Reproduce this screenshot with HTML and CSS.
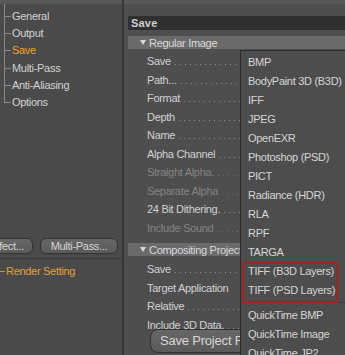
FILE: index.html
```html
<!DOCTYPE html>
<html lang="en">

<head>
    <meta charset="UTF-8">
    <meta name="viewport" content="width=device-width, initial-scale=1.0">
    <title>Render Settings - Save</title>
    <link rel="stylesheet" href="styles.css">
</head>

<body>
    <div class="window">
        <div class="side">
            <div class="strip"></div>
            <ul class="tree">
                <li>General</li>
                <li>Output</li>
                <li class="active">Save</li>
                <li>Multi-Pass</li>
                <li>Anti-Aliasing</li>
                <li>Options</li>
            </ul>
            <div class="side-buttons">
                <button class="btn btn-effect">Effect...</button>
                <button class="btn btn-multi">Multi-Pass...</button>
            </div>
            <div class="side-sep"></div>
            <div class="render-setting">Render Setting</div>
        </div>

        <div class="divider"></div>

        <div class="main">
            <div class="strip"></div>
            <div class="page-title">Save</div>

            <div class="group-head"><span class="arrow"></span>Regular Image</div>
            <div class="rows">
                <div class="row"><span>Save</span><i class="leader"></i></div>
                <div class="row"><span>Path...</span><i class="leader"></i></div>
                <div class="row"><span>Format</span><i class="leader"></i></div>
                <div class="row"><span>Depth</span><i class="leader"></i></div>
                <div class="row"><span>Name</span><i class="leader"></i></div>
                <div class="row"><span>Alpha Channel</span><i class="leader"></i></div>
                <div class="row disabled"><span>Straight Alpha.</span><i class="leader"></i></div>
                <div class="row disabled"><span>Separate Alpha</span><i class="leader"></i></div>
                <div class="row"><span>24 Bit Dithering.</span><i class="leader"></i></div>
                <div class="row disabled"><span>Include Sound</span><i class="leader"></i></div>
            </div>

            <div class="group-head"><span class="arrow"></span>Compositing Project File</div>
            <div class="rows rows-comp">
                <div class="row"><span>Save</span><i class="leader"></i></div>
                <div class="row"><span>Target Application</span></div>
                <div class="row"><span>Relative</span><i class="leader"></i></div>
                <div class="row"><span>Include 3D Data.</span><i class="leader"></i></div>
            </div>
            <button class="btn btn-project">Save Project File...</button>
        </div>

        <ul class="menu">
            <li>BMP</li>
            <li>BodyPaint 3D (B3D)</li>
            <li>IFF</li>
            <li>JPEG</li>
            <li>OpenEXR</li>
            <li>Photoshop (PSD)</li>
            <li>PICT</li>
            <li>Radiance (HDR)</li>
            <li>RLA</li>
            <li>RPF</li>
            <li>TARGA</li>
            <li>TIFF (B3D Layers)</li>
            <li>TIFF (PSD Layers)</li>
            <li class="menu-sep"></li>
            <li>QuickTime BMP</li>
            <li>QuickTime Image</li>
            <li>QuickTime JP2</li>
        </ul>

        <div class="highlight-box"></div>
    </div>
</body>

</html>
```

FILE: styles.css
```css
body {
    margin: 0;
    padding: 0;
    background-color: #4b4b4b;
    font-family: "Liberation Sans", Arial, sans-serif;
    font-size: 11px;
    letter-spacing: -0.3px;
    color: #d2d2d2;
}

.window {
    position: relative;
    display: flex;
    width: 345px;
    height: 355px;
    overflow: hidden;
}

.strip {
    height: 4px;
    background-color: #575757;
}

/* left tree panel */
.side {
    width: 122px;
    flex-shrink: 0;
    background-color: #4a4a4a;
    overflow: hidden;
}

.tree {
    list-style: none;
    margin: 0;
    padding: 4px 0 0 0;
    background: linear-gradient(#8a8a8a, #8a8a8a) 4px 0 / 1px 4px no-repeat;
}

.tree li {
    height: 17.2px;
    line-height: 17.2px;
    padding-left: 12px;
    background:
        linear-gradient(#8a8a8a, #8a8a8a) 4px 0 / 1px 100% no-repeat,
        linear-gradient(#8a8a8a, #8a8a8a) 4px 50% / 7px 1px no-repeat;
}

.tree li:last-child {
    background:
        linear-gradient(#8a8a8a, #8a8a8a) 4px 0 / 1px 50% no-repeat,
        linear-gradient(#8a8a8a, #8a8a8a) 4px 50% / 7px 1px no-repeat;
}

.tree li.active {
    color: #f0a52c;
}

.side-buttons {
    display: flex;
    gap: 7px;
    margin-top: 127px;
}

.btn {
    font-family: "Liberation Sans", Arial, sans-serif;
    font-size: 11px;
    letter-spacing: -0.3px;
    color: #d6d6d6;
    background: linear-gradient(#676767, #5a5a5a);
    border: 1px solid #323232;
    border-radius: 6px;
    padding: 0;
    height: 16px;
    line-height: 14px;
    flex-shrink: 0;
}

.btn-effect {
    width: 70px;
    margin-left: -37px;
    text-align: right;
    padding-right: 8px;
}

.btn-multi {
    width: 78px;
}

.side-sep {
    height: 1px;
    margin-top: 4px;
    background-color: #393939;
}

.render-setting {
    margin-top: 4px;
    height: 17px;
    line-height: 17px;
    padding-left: 6px;
    color: #e2a234;
    background: linear-gradient(#c99535, #c99535) 0 50% / 5px 1px no-repeat;
}

.divider {
    width: 2px;
    flex-shrink: 0;
    background-color: #363636;
}

/* right settings panel */
.main {
    flex: 1;
    background-color: #4e4e4e;
}

.page-title {
    margin: 12px 0 0 4px;
    height: 14px;
    line-height: 14px;
    padding-left: 3px;
    background-color: #303030;
    color: #cfcfcf;
    font-weight: bold;
    letter-spacing: 0.2px;
}

.group-head {
    display: flex;
    align-items: center;
    margin: 6px 0 0 4px;
    height: 13px;
    padding-left: 12px;
    background-color: #6a6a6a;
    color: #dadada;
    white-space: nowrap;
}

.arrow {
    width: 0;
    height: 0;
    margin-right: 3px;
    border-left: 3px solid transparent;
    border-right: 3px solid transparent;
    border-top: 5px solid #d8d8d8;
}

.rows {
    padding-top: 3px;
}

.rows-comp {
    padding-top: 4px;
}

.row {
    display: flex;
    align-items: center;
    height: 18.5px;
    padding-left: 23px;
    white-space: nowrap;
}

.row.disabled {
    color: #838383;
}

.leader {
    flex: 1;
    height: 1px;
    margin: 7px 0 0 4px;
    background: linear-gradient(to right, #8d8d8d 1px, transparent 1px) 0 0 / 5px 1px repeat-x;
}

.row.disabled .leader {
    background-image: linear-gradient(to right, #6c6c6c 1px, transparent 1px);
}

.btn-project {
    display: block;
    margin: -5px 0 0 26px;
    width: 130px;
    height: 24px;
    text-align: left;
    padding-left: 9px;
    font-size: 13px;
    letter-spacing: -0.2px;
    line-height: 22px;
    border-radius: 8px;
}

/* popup menu */
.menu {
    position: absolute;
    left: 240px;
    top: 50px;
    width: 115px;
    margin: 0;
    padding: 1.5px 0 0 0;
    list-style: none;
    background-color: #4d4d4d;
    border-left: 1px solid #2b2b2b;
    border-top: 1px solid #2b2b2b;
    color: #d6d6d6;
}

.menu li {
    height: 19px;
    line-height: 19px;
    padding-left: 7px;
    white-space: nowrap;
}

.menu li.menu-sep {
    height: 6px;
    background: linear-gradient(#3a3a3a, #3a3a3a) 0 50% / 100% 1px no-repeat;
}

.highlight-box {
    position: absolute;
    left: 242px;
    top: 262px;
    width: 92px;
    height: 37px;
    border: 2px solid #a62222;
}
```
